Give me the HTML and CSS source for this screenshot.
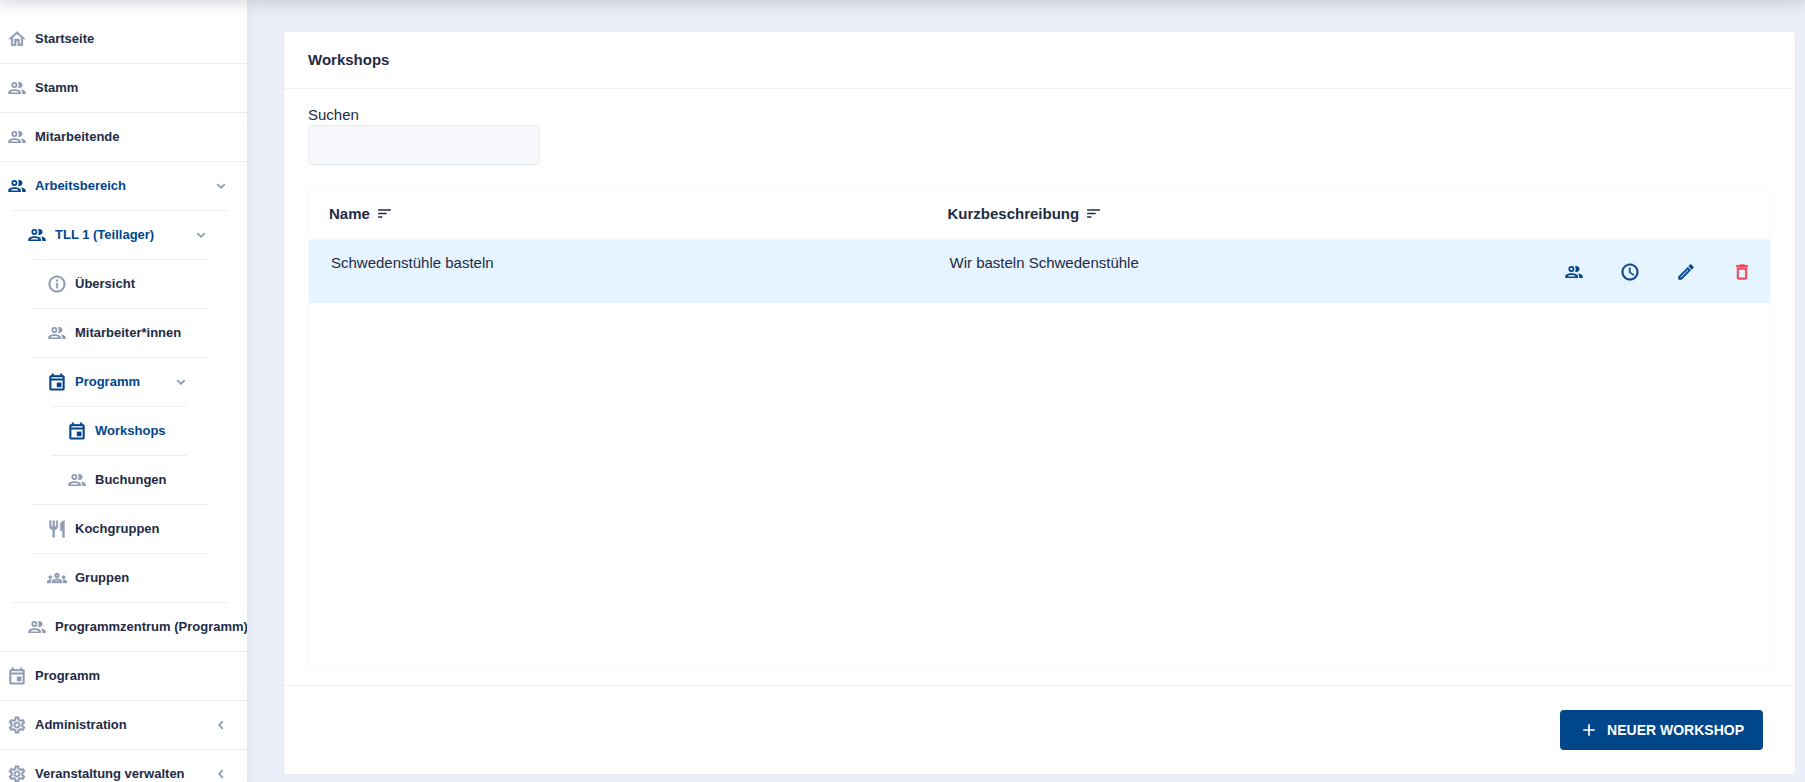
FILE: index.html
```html
<!DOCTYPE html>
<html lang="de">
<head>
<meta charset="utf-8">
<title>Workshops</title>
<link rel="stylesheet" href="styles.css">
</head>
<body>
<svg class="sprite" aria-hidden="true">
  <symbol id="home" viewBox="0 0 24 24"><path d="M12 5.69l5 4.5V18h-2v-6H9v6H7v-7.81l5-4.5M12 3L2 12h3v8h6v-6h2v6h6v-8h3L12 3z"/></symbol>
  <symbol id="people" viewBox="0 0 20 20"><g stroke="none"><path fill-rule="evenodd" d="M7.400 4a3 3 0 1 1 0 6a3 3 0 1 1 0-6zM7.400 5.800a1.200 1.200 0 1 0 0 2.400a1.200 1.200 0 1 0 0-2.400z"/><path d="M11 4.200C13.600 3.400 15.500 5 15.500 7S13.600 10.600 11 9.800C12 8.200 12 5.800 11 4.200z"/><path fill-rule="evenodd" d="M1.300 16v-1.800C1.300 12.200 4.600 11.200 7.600 11.200s6.300 1 6.300 3V16zM3.500 14.400h8.200c-.7-.8-2.400-1.300-4.100-1.300s-3.400.5-4.100 1.300z"/><path d="M13.600 11.500c2.900.3 5.100 1.300 5.100 2.900V16h-3.500v-1.700c0-1.100-.6-2-1.600-2.800z"/></g></symbol>
  <symbol id="info" viewBox="0 0 24 24"><path d="M11 7h2v2h-2zm0 4h2v6h-2zm1-9C6.48 2 2 6.48 2 12s4.48 10 10 10 10-4.48 10-10S17.52 2 12 2zm0 18c-4.41 0-8-3.59-8-8s3.59-8 8-8 8 3.590 8 8-3.590 8-8 8z"/></symbol>
  <symbol id="event" viewBox="0 0 24 24"><path d="M19 4h-1V2h-2v2H8V2H6v2H5c-1.11 0-2 .9-2 2v14c0 1.1.89 2 2 2h14c1.1 0 2-.9 2-2V6c0-1.1-.9-2-2-2zm0 16H5V10h14v10zm0-12H5V6h14v2zm-7 5h5v5h-5z"/></symbol>
  <symbol id="food" viewBox="0 0 24 24"><path d="M11 9H9V2H7v7H5V2H3v7c0 2.12 1.66 3.84 3.75 3.97V22h2.5v-9.03C11.34 12.84 13 11.12 13 9V2h-2v7zm5-3v8h2.5v8H21V2c-2.76 0-5 2.24-5 4z"/></symbol>
  <symbol id="groups" viewBox="0 0 24 24"><path d="M4 13c1.1 0 2-.9 2-2s-.9-2-2-2-2 .9-2 2 .9 2 2 2zm1.13 1.1C4.76 14.04 4.39 14 4 14c-.99 0-1.93.21-2.78.58C.48 14.9 0 15.62 0 16.43V18h4.5v-1.61c0-.83.23-1.61.63-2.29zM20 13c1.1 0 2-.9 2-2s-.9-2-2-2-2 .9-2 2 .9 2 2 2zm4 3.43c0-.81-.48-1.53-1.22-1.85-.85-.37-1.79-.58-2.78-.58-.39 0-.76.04-1.13.1.4.68.63 1.46.63 2.29V18H24v-1.57zm-7.76-2.78C15.07 13.13 13.63 12.75 12 12.75s-3.07.39-4.24.9C6.68 14.13 6 15.21 6 16.39V18h12v-1.61c0-1.18-.68-2.26-1.76-2.74zM8.07 16c.09-.23.13-.39.91-.69.97-.38 1.99-.56 3.02-.56s2.05.18 3.02.56c.77.3.81.46.91.69H8.07zM12 8c.55 0 1 .45 1 1s-.45 1-1 1-1-.45-1-1 .45-1 1-1m0-2c-1.66 0-3 1.34-3 3s1.34 3 3 3 3-1.34 3-3-1.34-3-3-3z"/></symbol>
  <symbol id="settings" viewBox="0 0 24 24"><path d="M19.43 12.98c.04-.32.07-.64.07-.98 0-.34-.03-.66-.07-.98l2.11-1.65c.19-.15.24-.42.12-.64l-2-3.46c-.09-.16-.26-.25-.44-.25-.06 0-.12.01-.17.03l-2.49 1c-.52-.4-1.08-.73-1.69-.98l-.38-2.65C14.46 2.18 14.25 2 14 2h-4c-.25 0-.46.18-.49.42l-.38 2.65c-.61.25-1.17.59-1.69.98l-2.49-1c-.06-.02-.12-.03-.18-.03-.17 0-.34.09-.43.25l-2 3.46c-.13.22-.07.49.12.64l2.11 1.65c-.04.32-.07.65-.07.98 0 .33.03.66.07.98l-2.11 1.65c-.19.15-.24.42-.12.64l2 3.46c.09.16.26.25.44.25.06 0 .12-.01.17-.03l2.49-1c.52.4 1.08.73 1.69.98l.38 2.65c.03.24.24.42.49.42h4c.25 0 .46-.18.49-.42l.38-2.65c.61-.25 1.17-.59 1.69-.98l2.49 1c.06.02.12.03.18.03.17 0 .34-.09.43-.25l2-3.46c.12-.22.07-.49-.12-.64l-2.11-1.65zm-1.98-1.71c.04.31.05.52.05.73 0 .21-.02.43-.05.73l-.14 1.13.89.7 1.08.84-.7 1.21-1.27-.51-1.04-.42-.9.68c-.43.32-.84.56-1.25.73l-1.06.43-.16 1.13-.2 1.35h-1.4l-.19-1.35-.16-1.13-1.06-.43c-.43-.18-.83-.41-1.23-.71l-.91-.7-1.06.43-1.27.51-.7-1.21 1.08-.84.89-.7-.14-1.13c-.03-.31-.05-.54-.05-.74s.02-.43.05-.73l.14-1.13-.89-.7-1.08-.84.7-1.21 1.27.51 1.04.42.9-.68c.43-.32.84-.56 1.25-.73l1.06-.43.16-1.13.2-1.35h1.39l.19 1.35.16 1.13 1.06.43c.43.18.83.41 1.23.71l.91.7 1.06-.43 1.27-.51.7 1.21-1.07.85-.89.7.14 1.13zM12 8c-2.21 0-4 1.79-4 4s1.79 4 4 4 4-1.79 4-4-1.79-4-4-4zm0 6c-1.1 0-2-.9-2-2s.9-2 2-2 2 .9 2 2-.9 2-2 2z"/></symbol>
  <symbol id="down" viewBox="0 0 16 16"><path d="M4.700 6.600L8 9.800l3.300-3.200" fill="none" stroke="currentColor" stroke-width="1.800" stroke-linecap="round"/></symbol>
  <symbol id="left" viewBox="0 0 16 16"><path d="M9.300 4.700L6.200 8l3.100 3.300" fill="none" stroke="currentColor" stroke-width="1.800" stroke-linecap="round"/></symbol>
  <symbol id="sort" viewBox="0 0 24 24"><path d="M3 18h6v-2H3v2zM3 6v2h18V6H3zm0 7h12v-2H3v2z"/></symbol>
  <symbol id="clock" viewBox="0 0 24 24"><path d="M11.990 2C6.470 2 2 6.480 2 12s4.470 10 9.990 10C17.520 22 22 17.520 22 12S17.520 2 11.990 2zM12 20c-4.420 0-8-3.580-8-8s3.580-8 8-8 8 3.580 8 8-3.580 8-8 8zm.5-13H11v6l5.250 3.150.75-1.230-4.500-2.670z"/></symbol>
  <symbol id="pencil" viewBox="0 0 24 24"><path d="M14.060 9.020l.92.92L5.920 19H5v-.92l9.060-9.060M17.660 3c-.25 0-.51.1-.7.29l-1.830 1.830 3.750 3.750 1.830-1.830c.39-.39.39-1.020 0-1.410l-2.340-2.340c-.2-.2-.45-.29-.71-.29zm-3.600 3.190L3 17.250V21h3.750L17.810 9.940l-3.750-3.750z"/></symbol>
  <symbol id="trash" viewBox="0 0 24 24"><path d="M6 19c0 1.100.9 2 2 2h8c1.100 0 2-.9 2-2V7H6v12zM8 9h8v10H8V9zm7.500-5l-1-1h-5l-1 1H5v2h14V4z"/></symbol>
  <symbol id="plus" viewBox="0 0 24 24"><path d="M19 13h-6v6h-2v-6H5v-2h6V5h2v6h6v2z"/></symbol>
</svg>
<div class="layout">
  <nav class="sidebar" aria-label="Hauptmenü">
    <ul class="menu">
      <li><a class="link" href="#"><svg class="icon"><use href="#home"/></svg><span>Startseite</span></a></li>
      <li><a class="link" href="#"><svg class="icon"><use href="#people"/></svg><span>Stamm</span></a></li>
      <li><a class="link" href="#"><svg class="icon"><use href="#people"/></svg><span>Mitarbeitende</span></a></li>
      <li><a class="link active" href="#"><svg class="icon"><use href="#people"/></svg><span>Arbeitsbereich</span><svg class="arrow"><use href="#down"/></svg></a>
        <ul class="menu first-level">
          <li><a class="link active" href="#"><svg class="icon"><use href="#people"/></svg><span>TLL 1 (Teillager)</span><svg class="arrow"><use href="#down"/></svg></a>
            <ul class="menu deep-level">
              <li><a class="link" href="#"><svg class="icon"><use href="#info"/></svg><span>Übersicht</span></a></li>
              <li><a class="link" href="#"><svg class="icon"><use href="#people"/></svg><span>Mitarbeiter*innen</span></a></li>
              <li><a class="link active" href="#"><svg class="icon"><use href="#event"/></svg><span>Programm</span><svg class="arrow"><use href="#down"/></svg></a>
                <ul class="menu deep-level">
                  <li><a class="link active" href="#"><svg class="icon"><use href="#event"/></svg><span>Workshops</span></a></li>
                  <li><a class="link" href="#"><svg class="icon"><use href="#people"/></svg><span>Buchungen</span></a></li>
                </ul>
              </li>
              <li><a class="link" href="#"><svg class="icon"><use href="#food"/></svg><span>Kochgruppen</span></a></li>
              <li><a class="link" href="#"><svg class="icon"><use href="#groups"/></svg><span>Gruppen</span></a></li>
            </ul>
          </li>
          <li><a class="link" href="#"><svg class="icon"><use href="#people"/></svg><span>Programmzentrum (Programm)</span></a></li>
        </ul>
      </li>
      <li><a class="link" href="#"><svg class="icon"><use href="#event"/></svg><span>Programm</span></a></li>
      <li><a class="link" href="#"><svg class="icon"><use href="#settings"/></svg><span>Administration</span><svg class="arrow"><use href="#left"/></svg></a></li>
      <li><a class="link" href="#"><svg class="icon"><use href="#settings"/></svg><span>Veranstaltung verwalten</span><svg class="arrow"><use href="#left"/></svg></a></li>
    </ul>
  </nav>
  <main class="content">
    <section class="card">
      <h1 class="card-header">Workshops</h1>
      <div class="card-body">
        <label for="search">Suchen</label>
        <input class="search" id="search" type="text">
        <div class="table-box">
          <table class="table">
            <thead>
              <tr>
                <th class="col-text">Name <svg class="sort"><use href="#sort"/></svg></th>
                <th class="col-text">Kurzbeschreibung <svg class="sort"><use href="#sort"/></svg></th>
                <th class="col-actions"></th>
              </tr>
            </thead>
            <tbody>
              <tr>
                <td>Schwedenstühle basteln</td>
                <td>Wir basteln Schwedenstühle</td>
                <td class="actions-cell">
                  <div class="actions">
                    <button class="action" type="button" aria-label="Teilnehmende"><svg class="icon"><use href="#people"/></svg></button>
                    <button class="action" type="button" aria-label="Zeiten"><svg class="icon"><use href="#clock"/></svg></button>
                    <button class="action" type="button" aria-label="Bearbeiten"><svg class="icon"><use href="#pencil"/></svg></button>
                    <button class="action danger" type="button" aria-label="Löschen"><svg class="icon"><use href="#trash"/></svg></button>
                  </div>
                </td>
              </tr>
            </tbody>
          </table>
        </div>
      </div>
      <footer class="card-footer">
        <button class="primary" type="button"><svg class="icon"><use href="#plus"/></svg>Neuer Workshop</button>
      </footer>
    </section>
  </main>
</div>
</body>
</html>
```
FILE: styles.css
```css
* { box-sizing: border-box; }

body {
  margin: 0;
  background: #edf1f7;
  color: #222b45;
  font: 15px/20px "Liberation Sans", Arial, sans-serif;
}

svg { display: block; flex: none; fill: currentColor; }
.sprite { position: absolute; width: 0; height: 0; }

.layout {
  display: flex;
  height: 100vh;
  overflow: hidden;
  background: #ebeff8;
}

/* Shadow of the page header above the visible area */
.layout::before {
  content: "";
  position: fixed;
  inset: -40px 0 auto;
  height: 40px;
  z-index: 2;
  box-shadow: 0 1px 16px 2px rgba(44, 51, 73, 0.2);
}

.sidebar {
  flex: none;
  width: 247px;
  padding-top: 15px;
  overflow: hidden;
  background: #fff;
  box-shadow: 0 8px 16px rgba(44, 51, 73, 0.08);
}

.menu { margin: 0; padding: 0; list-style: none; }
.menu li + li, .menu .menu li { border-top: 1px solid #e9edf6; }
.first-level { margin: 0 20px 0 11px; }
.deep-level { margin: 0 20px; }

.link {
  display: flex;
  align-items: center;
  gap: 8px;
  height: 48px;
  padding: 0 18px 0 7px;
  color: #222b45;
  font-size: 13px;
  font-weight: bold;
  text-decoration: none;
  white-space: nowrap;
}
.first-level .link { padding-left: 16px; }

.icon { width: 20px; height: 20px; }
.link .icon { color: #8f9bb3; }
.link .icon, .action .icon { stroke: currentColor; stroke-width: 0.5; }
.link.active, .link.active .icon { color: #00468b; }
.arrow { width: 16px; height: 16px; margin-left: auto; color: #8f9bb3; }

.content { flex: 1; min-width: 0; padding: 31px 9px 7px 36px; }

.card {
  display: flex;
  flex-direction: column;
  height: 100%;
  border: 1px solid #e4e9f2;
  border-radius: 4px;
  background: #fff;
}

.card-header {
  margin: 0;
  padding: 16px 24px;
  border-bottom: 1px solid #edf1f7;
  font-size: 15px;
  line-height: 24px;
}

.card-body {
  display: flex;
  flex: 1;
  flex-direction: column;
  padding: 16px 24px;
}

.search {
  width: 232px;
  height: 40px;
  padding: 0 16px;
  border: 1px solid #e4e9f2;
  border-radius: 4px;
  background: #f7f9fc;
  color: inherit;
  font: inherit;
}

.table-box { flex: 1; margin-top: 24px; border: 1px solid #f7f9fc; }

.table {
  width: 100%;
  border-collapse: collapse;
  table-layout: fixed;
}
.table th {
  height: 49px;
  padding: 0 20px;
  border-bottom: 2px solid #f7f9fc;
  text-align: left;
}
.col-actions { width: 224px; }
.table td {
  height: 64px;
  padding: 13px 22px;
  background: #e6f4ff;
  vertical-align: top;
}
.table .actions-cell { padding: 0; vertical-align: middle; }
.sort { display: inline-block; width: 17px; height: 17px; margin-left: 2px; vertical-align: -3px; }

.actions { display: flex; }
.action {
  display: flex;
  justify-content: center;
  width: 56px;
  padding: 0;
  border: 0;
  background: none;
  color: #00468b;
}
.danger { color: #f0465a; }

.card-footer {
  display: flex;
  justify-content: flex-end;
  padding: 24px 32px 24px 24px;
  border-top: 1px solid #edf1f7;
}

.primary {
  display: flex;
  align-items: center;
  gap: 8px;
  height: 40px;
  padding: 0 19px;
  border: 0;
  border-radius: 4px;
  background: #00468b;
  color: #fff;
  font: bold 14px/16px "Liberation Sans", Arial, sans-serif;
  text-transform: uppercase;
}
```
